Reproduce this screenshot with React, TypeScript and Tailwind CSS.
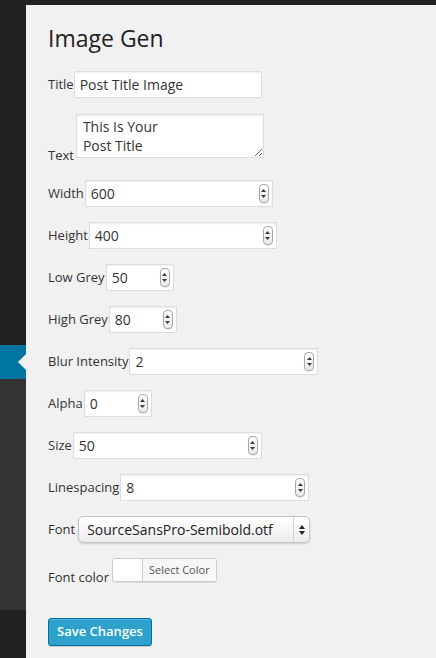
import type { ReactNode } from "react";

// small webkit-style stepper drawn beside number values
function Spinner() {
  return (
    <span className="flex h-[19px] w-[10px] shrink-0 flex-col items-center justify-center gap-[3px] rounded-[4px] border border-[#a8a8a8] bg-linear-to-b from-white to-[#e9e9e9] shadow-[0_1px_1px_rgba(0,0,0,0.08)]">
      <svg width="5" height="3" viewBox="0 0 5 3">
        <path d="M2.5 0L5 3H0z" fill="#3a3a3a" />
      </svg>
      <svg width="5" height="3" viewBox="0 0 5 3">
        <path d="M0 0h5L2.5 3z" fill="#3a3a3a" />
      </svg>
    </span>
  );
}

function NumberField({ value, className }: { value: string; className: string }) {
  return (
    <div
      className={`flex h-[27px] shrink-0 items-center border border-[#ddd] bg-white pl-[5px] pr-[3px] shadow-[inset_0_1px_2px_rgba(0,0,0,0.07)] ${className}`}
    >
      <input
        readOnly
        value={value}
        className="min-w-0 flex-1 bg-transparent text-[14px] leading-[19px] text-[#333] outline-none"
      />
      <Spinner />
    </div>
  );
}

function Row({ label, children }: { label: string; children: ReactNode }) {
  return (
    <div className="flex h-[27px] items-center gap-[1px]">
      <label className="text-[13px] leading-[17px] text-[#333]">{label}</label>
      {children}
    </div>
  );
}

export default function App() {
  return (
    <div className="flex h-[658px] w-[436px] overflow-hidden bg-[#222] font-['Open_Sans','Liberation_Sans',sans-serif]">
      {/* folded admin menu */}
      <div className="flex w-[26px] shrink-0 flex-col">
        <div className="h-[345px] bg-[#222]" />
        <div className="relative h-[34px] bg-[#0074a2]">
          <span className="absolute right-0 top-[9px] h-0 w-0 border-y-[8px] border-r-[8px] border-y-transparent border-r-[#f1f1f1]" />
        </div>
        <div className="h-[231px] bg-[#333]" />
        <div className="flex-1 bg-[#222]" />
      </div>

      <div className="flex flex-1 flex-col">
        <div className="h-[5px] bg-[#222]" />
        <div className="flex flex-1 flex-col bg-[#f1f1f1] pl-[22px] pt-[19px]">
          <h2 className="text-[23px] leading-[29px] text-[#222]">Image Gen</h2>

          <div className="mt-[18px] flex h-[27px] items-center">
            <label className="text-[13px] leading-[17px] text-[#333]">Title</label>
            <input
              readOnly
              value="Post Title Image"
              className="h-[27px] w-[188px] border border-[#ddd] bg-white px-[5px] text-[14px] text-[#333] shadow-[inset_0_1px_2px_rgba(0,0,0,0.07)] outline-none"
            />
          </div>

          <div className="mt-[16px] flex items-end">
            <label className="-mb-[6px] text-[13px] leading-[17px] text-[#333]">Text</label>
            <textarea
              readOnly
              value={"This Is Your\nPost Title"}
              className="ml-[2px] h-[44px] w-[188px] border border-[#ddd] bg-white px-[6px] py-[2px] text-[14px] leading-[19px] text-[#333] shadow-[inset_0_1px_2px_rgba(0,0,0,0.07)] outline-none"
            />
          </div>

          <div className="mt-[22px] flex flex-col gap-[15px]">
            <Row label="Width">
              <NumberField value="600" className="w-[188px]" />
            </Row>
            <Row label="Height">
              <NumberField value="400" className="w-[188px]" />
            </Row>
            <Row label="Low Grey">
              <NumberField value="50" className="w-[68px]" />
            </Row>
            <Row label="High Grey">
              <NumberField value="80" className="w-[68px]" />
            </Row>
            <Row label="Blur Intensity">
              <NumberField value="2" className="w-[189px]" />
            </Row>
            <Row label="Alpha">
              <NumberField value="0" className="w-[68px]" />
            </Row>
            <Row label="Size">
              <NumberField value="50" className="w-[189px]" />
            </Row>
            <Row label="Linespacing">
              <NumberField value="8" className="w-[189px]" />
            </Row>

            <div className="flex h-[27px] items-center gap-[3px]">
              <label className="text-[13px] leading-[17px] text-[#333]">Font</label>
              <div className="flex h-[27px] w-[232px] items-center rounded-[5px] border border-[#c6c6c6] bg-linear-to-b from-white to-[#ededed] shadow-[0_1px_2px_rgba(0,0,0,0.15)]">
                <span className="flex-1 pl-[8px] text-[14px] text-[#222]">SourceSansPro-Semibold.otf</span>
                <span className="flex h-full w-[16px] flex-col items-center justify-center gap-[2px] border-l border-[#d4d4d4]">
                  <svg width="6" height="4" viewBox="0 0 6 4">
                    <path d="M3 0L6 4H0z" fill="#222" />
                  </svg>
                  <svg width="6" height="4" viewBox="0 0 6 4">
                    <path d="M0 0h6L3 4z" fill="#222" />
                  </svg>
                </span>
              </div>
            </div>

            <div className="flex items-end gap-[3px]">
              <label className="-mb-[4px] text-[13px] leading-[17px] text-[#333]">Font color</label>
              <div className="flex h-[24px] overflow-hidden rounded-[3px] border border-[#ccc] bg-white shadow-[0_1px_0_rgba(0,0,0,0.08)]">
                <span className="w-[29px] bg-white" />
                <span className="flex items-center border-l border-[#ccc] bg-[#f7f7f7] px-[6px] text-[11px] text-[#555]">
                  Select Color
                </span>
              </div>
            </div>
          </div>

          <button className="mt-[36px] flex h-[28px] w-[104px] items-center justify-center rounded-[3px] border border-[#0074a2] bg-[#2ea2cc] pb-[1px] text-[13px] font-semibold text-white shadow-[inset_0_1px_0_rgba(120,200,230,0.5),0_1px_0_rgba(0,0,0,0.15)]">
            Save Changes
          </button>
        </div>
      </div>
    </div>
  );
}
